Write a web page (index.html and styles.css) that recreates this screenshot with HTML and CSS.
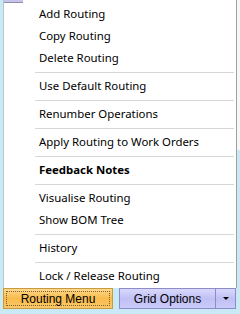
FILE: index.html
```html
<!DOCTYPE html>
<html lang="en">
<head>
    <meta charset="UTF-8">
    <meta name="viewport" content="width=device-width, initial-scale=1.0">
    <title>Routing Menu</title>
    <link rel="stylesheet" href="styles.css">
</head>
<body>
    <div class="top">
        <div class="menu">
            <div class="menu-strip"><span class="tab"></span></div>
            <div class="item">Add Routing</div>
            <div class="item">Copy Routing</div>
            <div class="item">Delete Routing</div>
            <div class="sep"></div>
            <div class="item">Use Default Routing</div>
            <div class="sep"></div>
            <div class="item">Renumber Operations</div>
            <div class="sep"></div>
            <div class="item">Apply Routing to Work Orders</div>
            <div class="sep"></div>
            <div class="item bold">Feedback Notes</div>
            <div class="sep"></div>
            <div class="item">Visualise Routing</div>
            <div class="item">Show BOM Tree</div>
            <div class="sep"></div>
            <div class="item">History</div>
            <div class="sep"></div>
            <div class="item">Lock / Release Routing</div>
        </div>
        <div class="side">
            <div class="side-white"></div>
        </div>
    </div>

    <div class="buttons">
        <div class="btn routing"><span class="focus">Routing Menu</span></div>
        <div class="btn grid">
            <span class="grid-label">Grid Options</span>
            <span class="drop"><span class="arrow"></span></span>
        </div>
    </div>
</body>
</html>
```

FILE: styles.css
```css
body {
    margin: 0;
    padding: 0;
    width: 240px;
    height: 314px;
    overflow: hidden;
    background-color: #c9e9f5;
    font-family: "Noto Sans", "Liberation Sans", sans-serif;
    font-size: 11.4px;
    color: #000;
}
.top {
    display: flex;
    padding-left: 3px;
}
.menu {
    width: 234px;
    height: 288px;
    box-sizing: border-box;
    background-color: #fff;
    border-left: 1px solid #b8c8d0;
    border-right: 1px solid #a0a0a0;
}
.menu-strip {
    height: 3px;
    display: flex;
}
.tab {
    width: 19px;
    height: 2px;
    background-color: #c4c4ec;
    border-bottom: 1px solid #9090a8;
}
.item {
    height: 22px;
    line-height: 22px;
    padding-left: 35px;
    white-space: nowrap;
}
.bold {
    font-weight: bold;
}
.sep {
    height: 6px;
    display: flex;
    align-items: center;
}
.sep::after {
    content: "";
    display: block;
    height: 1px;
    margin-left: 31px;
    margin-right: 2px;
    flex: 1;
    background-color: #d7d7d7;
}
.side {
    width: 3px;
}
.side-white {
    height: 150px;
    background-color: #f4f8f8;
}

/* barra de botoes */
.buttons {
    display: flex;
    gap: 6px;
    padding-left: 3px;
}
.btn {
    height: 21px;
    box-sizing: border-box;
    font-family: "Liberation Sans", Arial, sans-serif;
    font-size: 12px;
    display: flex;
    align-items: center;
}
.routing {
    width: 110px;
    padding: 2px;
    background: linear-gradient(#ffd98c, #f8bb4c 50%, #fcc868);
    border: 1px solid #c89a40;
}
.focus {
    flex: 1;
    height: 100%;
    box-sizing: border-box;
    border: 1px dotted #806030;
    display: flex;
    align-items: center;
    justify-content: center;
}
.grid {
    width: 117px;
    background: linear-gradient(#d8d8fc, #c0c0f4 50%, #cacafa);
    border: 1px solid #8c8cc8;
}
.grid-label {
    flex: 1;
    text-align: center;
}
.drop {
    width: 19px;
    height: 100%;
    border-left: 1px solid #8c8cc8;
    display: flex;
    align-items: center;
    justify-content: center;
}
.arrow {
    width: 0;
    height: 0;
    border-left: 3px solid transparent;
    border-right: 3px solid transparent;
    border-top: 3px solid #000;
}
```
